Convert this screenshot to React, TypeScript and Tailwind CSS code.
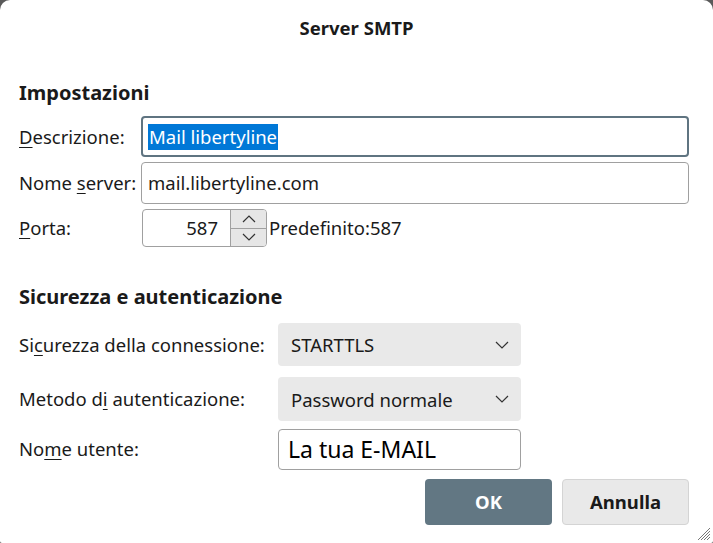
import React from "react";

const font = { fontFamily: '"Noto Sans", "Open Sans", sans-serif' };

function Chevron({ up = false, className = "" }: { up?: boolean; className?: string }) {
  return (
    <svg width="14" height="8" viewBox="0 0 14 8" className={className}>
      <polyline
        points={up ? "1,7 7,1 13,7" : "1,1 7,7 13,1"}
        fill="none"
        stroke="#333"
        strokeWidth="1.2"
      />
    </svg>
  );
}

function U({ children }: { children: React.ReactNode }) {
  return <span className="underline underline-offset-[3px] decoration-1">{children}</span>;
}

export default function App() {
  return (
    <div className="w-[713px] h-[543px] bg-[#5a5a5a] overflow-hidden" style={font}>
      <div className="relative w-full h-full bg-white rounded-t-[10px] rounded-b-[2px] text-[#1a1a1a] text-[18.5px]">
        <div className="h-[55px] flex items-center justify-center font-bold text-[18.5px] pt-[1px]">
          Server SMTP
        </div>
        <div className="pl-[19px] pr-[24px]">
          <div className="mt-[25px] h-[26px] font-bold text-[20px] leading-[26px]">Impostazioni</div>
          <div className="mt-[10px] flex flex-col gap-[5px]">
            <div className="flex items-center h-[41px]">
              <div className="w-[122px]">
                <U>D</U>escrizione:
              </div>
              <div className="flex-1 h-[41px] border-2 border-[#5f7481] rounded-[4px] flex items-center pl-[5px]">
                <span className="bg-[#0078d7] text-white px-[1px] leading-[26px]">Mail libertyline</span>
              </div>
            </div>
            <div className="flex items-center h-[42px]">
              <div className="w-[122px] whitespace-nowrap">
                Nome <U>s</U>erver:
              </div>
              <div className="flex-1 h-[42px] border border-[#a0a0a0] rounded-[4px] flex items-center pl-[6px]">
                mail.libertyline.com
              </div>
            </div>
            <div className="flex items-center h-[38px]">
              <div className="w-[123px]">
                <U>P</U>orta:
              </div>
              <div className="w-[125px] h-[38px] border border-[#a0a0a0] rounded-[4px] flex overflow-hidden">
                <div className="flex-1 flex items-center justify-end pr-[12px]">587</div>
                <div className="w-[36px] flex flex-col border-l border-[#a0a0a0]">
                  <div className="flex-1 bg-[#e6e6e6] flex items-center justify-center border-b border-[#a0a0a0]">
                    <Chevron up />
                  </div>
                  <div className="flex-1 bg-[#e6e6e6] flex items-center justify-center">
                    <Chevron />
                  </div>
                </div>
              </div>
              <div className="ml-[2px]">Predefinito:587</div>
            </div>
          </div>

          <div className="mt-[37px] h-[26px] font-bold text-[20px] leading-[26px]">
            Sicurezza e autenticazione
          </div>
          <div className="mt-[13px] flex items-center h-[43px]">
            <div className="w-[259px] whitespace-nowrap">
              Si<U>c</U>urezza della connessione:
            </div>
            <div className="w-[243px] h-[43px] bg-[#e9e9e9] rounded-[4px] flex items-center justify-between pl-[13px] pr-[12px]">
              <span>STARTTLS</span>
              <Chevron />
            </div>
          </div>
          <div className="mt-[11px] flex items-center h-[44px]">
            <div className="w-[259px] whitespace-nowrap">
              Metodo d<U>i</U> autenticazione:
            </div>
            <div className="w-[243px] h-[44px] bg-[#e9e9e9] rounded-[4px] flex items-center justify-between pl-[13px] pr-[12px]">
              <span className="mt-[2px]">Password normale</span>
              <Chevron />
            </div>
          </div>
          <div className="mt-[8px] flex items-center h-[41px]">
            <div className="w-[259px] self-start pt-[6px]">
              No<U>m</U>e utente:
            </div>
            <div className="w-[243px] h-[41px] border border-[#a0a0a0] rounded-[4px] flex items-center pl-[9px] text-[23px] text-black">
              La tua E-MAIL
            </div>
          </div>
          <div className="mt-[9px] flex justify-end gap-[10px]">
            <div className="w-[127px] h-[46px] bg-[#627783] rounded-[4px] flex items-center justify-center text-white font-bold">
              OK
            </div>
            <div className="w-[127px] h-[46px] bg-[#e9e9e9] border border-[#d4d4d4] rounded-[4px] flex items-center justify-center font-bold">
              Annulla
            </div>
          </div>
        </div>
        <svg className="absolute right-[2px] bottom-[2px]" width="14" height="14" viewBox="0 0 14 14">
          <line x1="13" y1="1" x2="1" y2="13" stroke="#777" strokeWidth="1" />
          <line x1="13" y1="4" x2="4" y2="13" stroke="#777" strokeWidth="1" />
          <line x1="13" y1="7" x2="7" y2="13" stroke="#777" strokeWidth="1" />
          <line x1="13" y1="10" x2="10" y2="13" stroke="#777" strokeWidth="1" />
        </svg>
      </div>
    </div>
  );
}
